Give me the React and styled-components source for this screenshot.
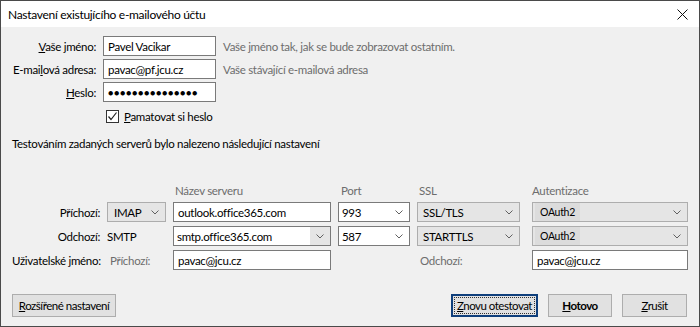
import React from 'react'
import styled, { createGlobalStyle } from 'styled-components'

const GlobalStyle = createGlobalStyle`
  html, body { margin: 0; padding: 0; background: #f0f0f0; }
  * { box-sizing: border-box; }
`

const FONT = `Lato, "Noto Sans", sans-serif`

const Dialog = styled.div`
  width: 700px;
  height: 327px;
  border: 1px solid #4a4a4a;
  background: #f0f0f0;
  display: flex;
  flex-direction: column;
  font-family: ${FONT};
  font-size: 11.5px;
  letter-spacing: -0.3px;
  color: #000;
`

const TitleBar = styled.div`
  height: 26px;
  background: #fff;
  display: flex;
  align-items: center;
  justify-content: space-between;
  padding: 0 11px 0 7px;
  flex-shrink: 0;
  font-size: 12px;
`

const Body = styled.div`
  flex: 1;
  display: flex;
  flex-direction: column;
  padding: 9px 0 0 11px;
`

const AccountGrid = styled.div`
  display: grid;
  grid-template-columns: 84px 113px auto;
  grid-auto-rows: 20px;
  column-gap: 7px;
  row-gap: 3px;
  align-items: center;
`

const Label = styled.label`
  text-align: right;
  white-space: nowrap;
`

const Hint = styled.span`
  color: #6d6d6d;
  white-space: nowrap;
`

const TextBox = styled.div`
  height: 20px;
  border: 1px solid #7a7a7a;
  background: #fff;
  display: flex;
  align-items: center;
  padding: 0 4px;
  white-space: nowrap;
  overflow: hidden;
  letter-spacing: ${p => (p.$dots ? '0.6px' : 'inherit')};
  font-size: ${p => (p.$dots ? '9px' : 'inherit')};
`

const CheckRow = styled.div`
  grid-column: 2 / 4;
  display: flex;
  align-items: center;
  gap: 5px;
  margin-left: 3px;
  margin-top: 2px;
`

const CheckBox = styled.span`
  width: 13px;
  height: 13px;
  border: 1px solid #333;
  background: #fff;
  display: flex;
  align-items: center;
  justify-content: center;
`

const Note = styled.div`
  margin-top: 11px;
  line-height: 16px;
`

const ServerGrid = styled.div`
  margin-top: 30px;
  display: grid;
  grid-template-columns: 88px 59px 158px 72px 108px 156px;
  grid-template-rows: 16px 20px 20px 20px;
  column-gap: 7px;
  row-gap: 4px;
  align-items: center;
  & > :first-child { grid-column: 3; }
`

const ColHead = styled.span`
  color: #6d6d6d;
  padding-left: ${p => p.$indent || 0}px;
  white-space: nowrap;
`

const Combo = styled.div`
  height: 20px;
  width: ${p => (p.$w ? `${p.$w}px` : 'auto')};
  border: 1px solid ${p => (p.$editable ? '#7a7a7a' : '#adadad')};
  background: ${p => (p.$editable ? '#fff' : '#e5e5e5')};
  display: flex;
  align-items: stretch;
  white-space: nowrap;
`

const ComboText = styled.span`
  flex: 1;
  display: flex;
  align-items: center;
  padding-left: ${p => (p.$pad ? p.$pad : 5)}px;
  font-size: ${p => (p.$small ? '10.5px' : 'inherit')};
  & > em {
    font-style: normal;
    background: #dcdcdc;
    padding: 3px 5px;
    margin-left: -4px;
  }
`

const ComboArrow = styled.span`
  width: 20px;
  display: flex;
  align-items: center;
  justify-content: center;
  background: ${p => (p.$grey ? '#e5e5e5' : 'transparent')};
`

const PlainText = styled.span`
  padding-left: ${p => p.$indent || 0}px;
  color: ${p => (p.$muted ? '#6d6d6d' : '#000')};
  white-space: nowrap;
`

const Footer = styled.div`
  margin-top: auto;
  display: flex;
  align-items: center;
  gap: 10px;
  padding: 0 12px 9px 11px;
`

const Button = styled.button`
  height: 23px;
  width: ${p => p.$w}px;
  margin-left: ${p => (p.$push ? 'auto' : '0')};
  background: #e1e1e1;
  border: ${p => (p.$default ? '2px solid #0f3f7c' : '1px solid #adadad')};
  font-family: ${FONT};
  font-size: 11.5px;
  letter-spacing: -0.5px;
  font-weight: ${p => (p.$bold ? 700 : 400)};
  white-space: nowrap;
  color: #000;
  padding: 0;
  position: relative;
  cursor: pointer;
  &::after {
    content: '';
    display: ${p => (p.$default ? 'block' : 'none')};
    position: absolute;
    inset: 1px;
    border: 1px dotted #333;
  }
`

const Chevron = () => (
  <svg width="8" height="5" viewBox="0 0 8 5">
    <polyline points="0.5,0.5 4,4 7.5,0.5" fill="none" stroke="#606060" strokeWidth="1" />
  </svg>
)

const Close = () => (
  <svg width="11" height="11" viewBox="0 0 11 11">
    <path d="M0.5 0.5 L10.5 10.5 M10.5 0.5 L0.5 10.5" stroke="#111" strokeWidth="1" />
  </svg>
)

const Check = () => (
  <svg width="11" height="11" viewBox="0 0 11 11">
    <polyline points="1.5,5.5 4,8.5 9.5,1.5" fill="none" stroke="#222" strokeWidth="1.2" />
  </svg>
)

const Key = ({ children }) => <u>{children}</u>

export default function App() {
  return (
    <>
      <GlobalStyle />
      <Dialog>
        <TitleBar>
          <span>Nastavení existujícího e-mailového účtu</span>
          <Close />
        </TitleBar>
        <Body>
          <AccountGrid>
            <Label><Key>V</Key>aše jméno:</Label>
            <TextBox>Pavel Vacikar</TextBox>
            <Hint>Vaše jméno tak, jak se bude zobrazovat ostatním.</Hint>

            <Label>E-mai<Key>l</Key>ová adresa:</Label>
            <TextBox>pavac@pf.jcu.cz</TextBox>
            <Hint>Vaše stávající e-mailová adresa</Hint>

            <Label><Key>H</Key>eslo:</Label>
            <TextBox $dots>●●●●●●●●●●●●●●●</TextBox>
            <span />

            <CheckRow>
              <CheckBox><Check /></CheckBox>
              <span><Key>P</Key>amatovat si heslo</span>
            </CheckRow>
          </AccountGrid>

          <Note>Testováním zadaných serverů bylo nalezeno následující nastavení</Note>

          <ServerGrid>
            <ColHead $indent={2}>Název serveru</ColHead>
            <ColHead $indent={3}>Port</ColHead>
            <ColHead $indent={2}>SSL</ColHead>
            <ColHead $indent={0}>Autentizace</ColHead>

            <Label>Příchozí:</Label>
            <Combo>
              <ComboText $pad={6}>IMAP</ComboText>
              <ComboArrow><Chevron /></ComboArrow>
            </Combo>
            <TextBox>outlook.office365.com</TextBox>
            <Combo $editable>
              <ComboText $pad={3}>993</ComboText>
              <ComboArrow><Chevron /></ComboArrow>
            </Combo>
            <Combo $w={103}>
              <ComboText>SSL/TLS</ComboText>
              <ComboArrow><Chevron /></ComboArrow>
            </Combo>
            <Combo>
              <ComboText $small $pad={6}><em>OAuth2</em></ComboText>
              <ComboArrow><Chevron /></ComboArrow>
            </Combo>

            <Label>Odchozí:</Label>
            <PlainText>SMTP</PlainText>
            <Combo $editable>
              <ComboText $pad={3}>smtp.office365.com</ComboText>
              <ComboArrow $grey><Chevron /></ComboArrow>
            </Combo>
            <Combo $editable>
              <ComboText $pad={3}>587</ComboText>
              <ComboArrow><Chevron /></ComboArrow>
            </Combo>
            <Combo $w={103}>
              <ComboText>STARTTLS</ComboText>
              <ComboArrow><Chevron /></ComboArrow>
            </Combo>
            <Combo>
              <ComboText $small $pad={6}><em>OAuth2</em></ComboText>
              <ComboArrow><Chevron /></ComboArrow>
            </Combo>

            <Label>Uživatelské jméno:</Label>
            <PlainText $muted $indent={3}>Příchozí:</PlainText>
            <TextBox>pavac@jcu.cz</TextBox>
            <span />
            <PlainText $muted $indent={3}>Odchozí:</PlainText>
            <TextBox>pavac@jcu.cz</TextBox>
          </ServerGrid>
        </Body>
        <Footer>
          <Button $w={104}><Key>R</Key>ozšířené nastavení</Button>
          <Button $w={87} $default $push><Key>Z</Key>novu otestovat</Button>
          <Button $w={64} $bold><Key>H</Key>otovo</Button>
          <Button $w={65}><Key>Z</Key>rušit</Button>
        </Footer>
      </Dialog>
    </>
  )
}
